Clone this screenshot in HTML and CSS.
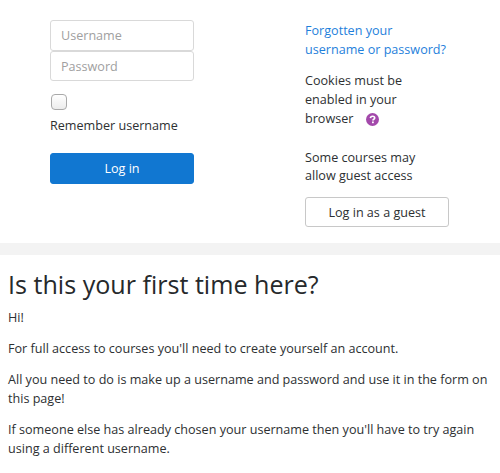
FILE: index.html
```html
<!DOCTYPE html>
<html lang="en">
<head>
  <meta charset="UTF-8" />
  <title>Log in</title>
  <link rel="stylesheet" href="styles.css">
</head>
<body>

  <div class="login-panel">
    <form class="login-form">
      <input type="text" class="field" placeholder="Username" />
      <input type="password" class="field" placeholder="Password" />
      <div class="remember">
        <input type="checkbox" id="rememberme" class="check" />
        <label for="rememberme">Remember username</label>
      </div>
      <button type="button" class="btn btn-primary">Log in</button>
    </form>

    <div class="login-side">
      <a href="#" class="forgot">Forgotten your username or password?</a>
      <div class="cookies">
        Cookies must be enabled in your browser
        <svg class="help-icon" viewBox="0 0 13 13" width="13" height="13" aria-hidden="true">
          <circle cx="6.5" cy="6.5" r="6.5" fill="#a349ab"/>
          <path d="M4.4 5.1C4.5 3.9 5.4 3.2 6.6 3.2C7.8 3.2 8.7 3.9 8.7 4.9C8.7 6.3 6.9 6.2 6.9 7.6" fill="none" stroke="#fff" stroke-width="1.6"/>
          <rect x="6" y="8.5" width="1.8" height="1.7" fill="#fff"/>
        </svg>
      </div>
      <div class="guest-note">Some courses may allow guest access</div>
      <button type="button" class="btn btn-guest">Log in as a guest</button>
    </div>
  </div>

  <div class="divider"></div>

  <div class="first-time">
    <h2>Is this your first time here?</h2>
    <p>Hi!</p>
    <p>For full access to courses you'll need to create yourself an account.</p>
    <p>All you need to do is make up a username and password and use it in the form on this page!</p>
    <p>If someone else has already chosen your username then you'll have to try again using a different username.</p>
  </div>

</body>
</html>
```

FILE: styles.css
```css
body {
  font-family: "Open Sans", sans-serif;
  font-size: 12.6px;
  line-height: 19px;
  color: #2d3032;
  background: #fff;
  margin: 0;
}
.login-panel {
  display: flex;
  height: 243px;
  padding: 20px 0 0 50px;
  box-sizing: border-box;
}
.login-form {
  width: 144px;
  display: flex;
  flex-direction: column;
}
.field {
  width: 100%;
  height: 31px;
  box-sizing: border-box;
  margin: 0;
  padding: 0 10px;
  font: inherit;
  color: #55595c;
  background: #fff;
  border: 1px solid #d9d9d9;
  border-radius: 3px;
}
.field + .field {
  height: 30px;
}
.field::placeholder {
  color: #a0a0a0;
  opacity: 1;
}
.remember {
  margin-top: 13px;
}
.check {
  display: block;
  appearance: none;
  width: 16px;
  height: 16px;
  margin: 0 0 6px 1px;
  background: linear-gradient(#fff, #ececec);
  border: 1px solid #a9a9a9;
  border-radius: 4px;
}
.btn {
  width: 144px;
  font: inherit;
  border-radius: 3px;
  padding: 0;
  cursor: pointer;
}
.btn-primary {
  height: 31px;
  margin-top: 18px;
  color: #fff;
  background: #1177d1;
  border: 1px solid #1177d1;
}
.login-side {
  width: 144px;
  margin: 1px 0 0 111px;
}
.forgot {
  display: block;
  color: #1f7fdb;
  text-decoration: none;
}
.cookies {
  margin-top: 12px;
  width: 100px;
}
.help-icon {
  margin-left: 9px;
  vertical-align: -3px;
}
.guest-note {
  margin-top: 21px;
  width: 120px;
  line-height: 18px;
}
.btn-guest {
  height: 30px;
  margin-top: 12px;
  color: #2d3032;
  background: #fff;
  border: 1px solid #c8c8c8;
}
.divider {
  height: 12px;
  background: #f3f3f3;
}
.first-time {
  padding: 14px 8px 0;
}
.first-time h2 {
  font-size: 25.1px;
  line-height: 31px;
  font-weight: 400;
  color: #26292b;
  margin: 0 0 8px;
}
.first-time p {
  margin: 0 0 12px;
}
```
